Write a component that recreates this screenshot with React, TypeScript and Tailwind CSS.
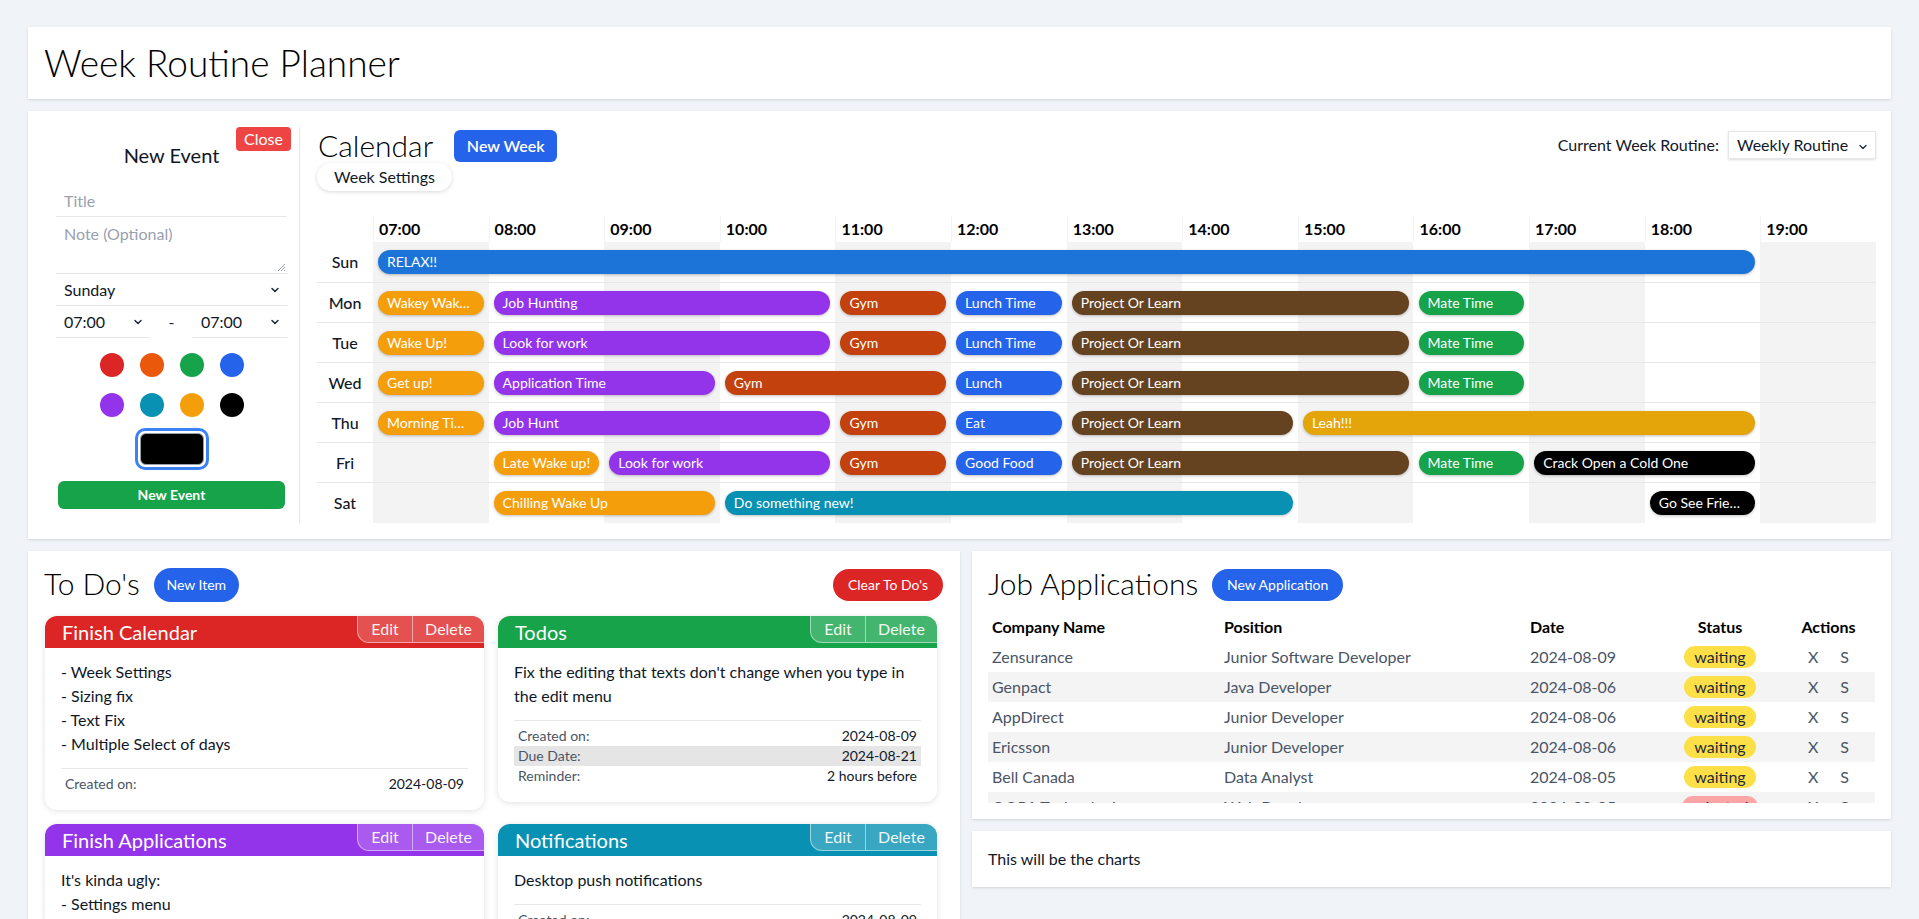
import { ChevronDown } from "lucide-react"

const hours = ["07:00", "08:00", "09:00", "10:00", "11:00", "12:00", "13:00", "14:00", "15:00", "16:00", "17:00", "18:00", "19:00"]

type CalEvent = { title: string; start: number; end: number; color: string }

const orange = "bg-[#f59e0b]"
const purple = "bg-[#9333ea]"
const gym = "bg-[#c2410c]"
const blue = "bg-[#2563eb]"
const brown = "bg-[#654321]"
const green = "bg-[#16a34a]"

const week: { day: string; events: CalEvent[] }[] = [
  { day: "Sun", events: [{ title: "RELAX!!", start: 7, end: 19, color: "bg-[#1c74d9]" }] },
  {
    day: "Mon",
    events: [
      { title: "Wakey Wakey Eggs and Bakey", start: 7, end: 8, color: orange },
      { title: "Job Hunting", start: 8, end: 11, color: purple },
      { title: "Gym", start: 11, end: 12, color: gym },
      { title: "Lunch Time", start: 12, end: 13, color: blue },
      { title: "Project Or Learn", start: 13, end: 16, color: brown },
      { title: "Mate Time", start: 16, end: 17, color: green },
    ],
  },
  {
    day: "Tue",
    events: [
      { title: "Wake Up!", start: 7, end: 8, color: orange },
      { title: "Look for work", start: 8, end: 11, color: purple },
      { title: "Gym", start: 11, end: 12, color: gym },
      { title: "Lunch Time", start: 12, end: 13, color: blue },
      { title: "Project Or Learn", start: 13, end: 16, color: brown },
      { title: "Mate Time", start: 16, end: 17, color: green },
    ],
  },
  {
    day: "Wed",
    events: [
      { title: "Get up!", start: 7, end: 8, color: orange },
      { title: "Application Time", start: 8, end: 10, color: purple },
      { title: "Gym", start: 10, end: 12, color: gym },
      { title: "Lunch", start: 12, end: 13, color: blue },
      { title: "Project Or Learn", start: 13, end: 16, color: brown },
      { title: "Mate Time", start: 16, end: 17, color: green },
    ],
  },
  {
    day: "Thu",
    events: [
      { title: "Morning Time Routine", start: 7, end: 8, color: orange },
      { title: "Job Hunt", start: 8, end: 11, color: purple },
      { title: "Gym", start: 11, end: 12, color: gym },
      { title: "Eat", start: 12, end: 13, color: blue },
      { title: "Project Or Learn", start: 13, end: 15, color: brown },
      { title: "Leah!!!", start: 15, end: 19, color: "bg-[#e4a50a]" },
    ],
  },
  {
    day: "Fri",
    events: [
      { title: "Late Wake up!", start: 8, end: 9, color: orange },
      { title: "Look for work", start: 9, end: 11, color: purple },
      { title: "Gym", start: 11, end: 12, color: gym },
      { title: "Good Food", start: 12, end: 13, color: blue },
      { title: "Project Or Learn", start: 13, end: 16, color: brown },
      { title: "Mate Time", start: 16, end: 17, color: green },
      { title: "Crack Open a Cold One", start: 17, end: 19, color: "bg-black" },
    ],
  },
  {
    day: "Sat",
    events: [
      { title: "Chilling Wake Up", start: 8, end: 10, color: orange },
      { title: "Do something new!", start: 10, end: 15, color: "bg-[#0891b2]" },
      { title: "Go See Friends", start: 18, end: 19, color: "bg-black" },
    ],
  },
]

const swatches = ["bg-[#dc2626]", "bg-[#ea580c]", "bg-[#16a34a]", "bg-[#2563eb]", "bg-[#9333ea]", "bg-[#0891b2]", "bg-[#f59e0b]", "bg-black"]

type Todo = { title: string; color: string; body: string; info: [string, string][] }

const todos: Todo[] = [
  {
    title: "Finish Calendar",
    color: "bg-[#dc2626]",
    body: "- Week Settings\n- Sizing fix\n- Text Fix\n- Multiple Select of days",
    info: [["Created on:", "2024-08-09"]],
  },
  {
    title: "Todos",
    color: "bg-[#16a34a]",
    body: "Fix the editing that texts don't change when you type in the edit menu",
    info: [
      ["Created on:", "2024-08-09"],
      ["Due Date:", "2024-08-21"],
      ["Reminder:", "2 hours before"],
    ],
  },
  {
    title: "Finish Applications",
    color: "bg-[#9333ea]",
    body: "It's kinda ugly:\n- Settings menu\n- Colors\n- Layout",
    info: [["Created on:", "2024-08-09"]],
  },
  {
    title: "Notifications",
    color: "bg-[#0891b2]",
    body: "Desktop push notifications",
    info: [["Created on:", "2024-08-09"]],
  },
]

const applications = [
  { company: "Zensurance", position: "Junior Software Developer", date: "2024-08-09", status: "waiting" },
  { company: "Genpact", position: "Java Developer", date: "2024-08-06", status: "waiting" },
  { company: "AppDirect", position: "Junior Developer", date: "2024-08-06", status: "waiting" },
  { company: "Ericsson", position: "Junior Developer", date: "2024-08-06", status: "waiting" },
  { company: "Bell Canada", position: "Data Analyst", date: "2024-08-05", status: "waiting" },
  { company: "OOPA Technologies", position: "Web Developer", date: "2024-08-05", status: "rejected" },
  { company: "Shopify", position: "Junior Developer", date: "2024-08-04", status: "waiting" },
]

function UnderlineSelect({ value, className }: { value: string; className?: string }) {
  return (
    <div className={`relative border-b border-gray-200 ${className ?? ""}`}>
      <div className="h-[31px] px-2 text-base leading-[31px] text-gray-900">{value}</div>
      <ChevronDown className="absolute right-[6px] top-[10px] h-3 w-3 text-gray-800" strokeWidth={3} />
    </div>
  )
}

function NewEventForm() {
  return (
    <div className="relative w-[272px] shrink-0 border-r border-gray-200">
      <button type="button" className="absolute right-2 top-0 h-6 rounded-sm bg-[#ef4444] px-2 text-base leading-6 text-white">
        Close
      </button>
      <div className="ml-7 mr-3 flex flex-col">
        <h2 className="pt-[14px] text-center text-xl leading-7 text-gray-900">New Event</h2>
        <div className="mt-[16px] h-8 border-b border-gray-200 px-2 text-base leading-8 text-gray-400">Title</div>
        <div className="relative h-[57px] border-b border-gray-200 px-2 pt-[5px] text-base leading-6 text-gray-400">
          Note (Optional)
          <svg className="absolute bottom-[2px] right-[2px] h-2 w-2" viewBox="0 0 8 8">
            <path d="M8 1L1 8M8 4L4 8M8 7L7 8" stroke="#9ca3af" strokeWidth="1" />
          </svg>
        </div>
        <UnderlineSelect value="Sunday" />
        <div className="flex items-center justify-between">
          <UnderlineSelect value="07:00" className="w-[94px]" />
          <span className="text-base text-gray-800">-</span>
          <UnderlineSelect value="07:00" className="w-[94px]" />
        </div>
        <div className="mx-auto mt-[15px] grid grid-cols-4 gap-4">
          {swatches.map((c) => (
            <span key={c} className={`h-6 w-6 rounded-full ${c}`} />
          ))}
        </div>
        <div className="mx-auto mt-[11px] h-[42px] w-[74px] rounded-[10px] border-[3px] border-[#3b82f6] p-[2px]">
          <div className="h-full w-full rounded-md border border-gray-400 bg-black" />
        </div>
        <button type="button" className="mx-[2px] mt-[11px] h-7 rounded-md bg-[#16a34a] text-sm font-bold text-white">
          New Event
        </button>
      </div>
    </div>
  )
}

function Calendar() {
  return (
    <div className="flex min-w-0 flex-1 flex-col pl-[17px] pr-[15px]">
      <div className="flex items-start justify-between">
        <div>
          <div className="flex items-center gap-[21px]">
            <h2 className="pl-px text-3xl font-light leading-9 text-black">Calendar</h2>
            <button type="button" className="mt-[2px] h-8 w-[103px] rounded-md bg-[#2563eb] text-base font-semibold text-white">
              New Week
            </button>
          </div>
          <button type="button" className="h-7 w-[135px] rounded-full bg-white text-base text-gray-900 shadow-[0_1px_4px_rgba(0,0,0,0.15)]">
            Week Settings
          </button>
        </div>
        <div className="mt-1 flex items-center gap-[9px]">
          <span className="text-base text-gray-900">Current Week Routine:</span>
          <div className="relative h-7 w-[148px] border border-gray-200 bg-white shadow-sm">
            <span className="pl-2 text-base leading-[26px] text-gray-900">Weekly Routine</span>
            <ChevronDown className="absolute right-[6px] top-[9px] h-3 w-3 text-gray-800" strokeWidth={2.5} />
          </div>
        </div>
      </div>

      <div className="mt-[25px] flex flex-col">
        <div className="flex h-[26px]">
          <div className="w-14 shrink-0" />
          <div className="flex flex-1">
            {hours.map((h) => (
              <div key={h} className="flex-1 border-l border-gray-100 pl-[5px] text-base font-bold leading-[26px] text-black">
                {h}
              </div>
            ))}
          </div>
        </div>
        {week.map((row, i) => (
          <div key={row.day} className={`flex ${i === 0 ? "h-[41px]" : "h-10"} ${i < week.length - 1 ? "border-b border-gray-200" : ""}`}>
            <div className="flex w-14 shrink-0 items-center justify-center text-base font-medium text-gray-900">{row.day}</div>
            <div className="relative flex flex-1">
              {hours.map((h, j) => (
                <div key={h} className={`flex-1 ${j % 2 === 0 ? "bg-[#f3f3f3]" : "bg-white"}`} />
              ))}
              {row.events.map((ev) => (
                <div
                  key={ev.title + ev.start}
                  className={`absolute top-1/2 h-6 -translate-y-1/2 truncate rounded-full pl-[9px] pr-2 text-sm leading-6 text-white shadow-[0_1px_3px_rgba(0,0,0,0.25)] ${ev.color}`}
                  style={{
                    left: `calc(${((ev.start - 7) / 13) * 100}% + 5px)`,
                    width: `calc(${((ev.end - ev.start) / 13) * 100}% - 10px)`,
                  }}
                >
                  {ev.title}
                </div>
              ))}
            </div>
          </div>
        ))}
      </div>
    </div>
  )
}

function TodoCard({ todo }: { todo: Todo }) {
  return (
    <div className="overflow-hidden rounded-xl bg-white shadow-[0_1px_6px_rgba(0,0,0,0.12)]">
      <div className={`relative h-8 ${todo.color}`}>
        <span className="pl-[17px] text-xl leading-8 text-white">{todo.title}</span>
        <div className="absolute right-0 top-0 flex h-[27px] overflow-hidden rounded-bl-xl rounded-tr-xl border-b border-l border-white/50 bg-white/20 text-base leading-[26px] text-white/95">
          <span className="w-[54px] text-center">Edit</span>
          <span className="w-[72px] border-l border-white/50 text-center">Delete</span>
        </div>
      </div>
      <div className="px-4 pb-4 pt-3">
        <p className="whitespace-pre-line text-base leading-6 text-gray-900">{todo.body}</p>
        <div className="mt-3 border-t border-gray-200 pt-[5px]">
          {todo.info.map(([label, value], i) => (
            <div key={label} className={`flex h-5 items-center justify-between px-1 text-sm ${i % 2 === 1 ? "bg-[#e5e5e5]" : ""}`}>
              <span className="text-gray-600">{label}</span>
              <span className="text-gray-900">{value}</span>
            </div>
          ))}
        </div>
      </div>
    </div>
  )
}

function TodoSection() {
  return (
    <div className="w-[932px] shrink-0 self-start bg-white p-4 shadow-sm">
      <div className="flex h-9 items-center justify-between">
        <div className="flex items-center gap-[14px]">
          <h2 className="pb-1 text-3xl font-light text-black">To Do's</h2>
          <button type="button" className="h-[34px] w-[85px] rounded-full bg-[#2563eb] text-sm text-white">
            New Item
          </button>
        </div>
        <button type="button" className="mr-[1px] h-8 w-[110px] rounded-full bg-[#dc2626] text-sm text-white">
          Clear To Do's
        </button>
      </div>
      <div className="ml-px mt-[13px] grid w-[892px] grid-cols-2 items-start gap-[14px]">
        {todos.map((t) => (
          <TodoCard key={t.title} todo={t} />
        ))}
      </div>
    </div>
  )
}

function JobApplications() {
  return (
    <div className="bg-white p-4 shadow-sm">
      <div className="flex h-9 items-center gap-[14px]">
        <h2 className="pb-1 text-3xl font-light text-black">Job Applications</h2>
        <button type="button" className="h-8 w-[131px] rounded-full bg-[#2563eb] text-sm text-white">
          New Application
        </button>
      </div>
      <div className="mt-[8px] h-[192px] overflow-hidden">
        <table className="w-full table-fixed border-collapse text-left">
          <thead>
            <tr className="h-[31px] text-base font-bold text-black">
              <th className="w-[236px] pl-1">Company Name</th>
              <th className="w-[306px]">Position</th>
              <th className="w-[136px]">Date</th>
              <th className="w-[108px] text-center">Status</th>
              <th className="pl-2 text-center">Actions</th>
            </tr>
          </thead>
          <tbody>
            {applications.map((a, i) => (
              <tr key={a.company} className={`h-[30px] text-base text-gray-600 ${i % 2 === 1 ? "bg-[#f4f4f4]" : ""}`}>
                <td className="pl-1">{a.company}</td>
                <td>{a.position}</td>
                <td>{a.date}</td>
                <td className="text-center">
                  <span
                    className={`inline-block h-[22px] rounded-full px-[10px] leading-[22px] text-gray-800 ${
                      a.status === "waiting" ? "bg-[#fde047]" : "bg-[#fca5a5]"
                    }`}
                  >
                    {a.status}
                  </span>
                </td>
                <td className="pl-2">
                  <div className="flex justify-center gap-[22px]">
                    <span>X</span>
                    <span>S</span>
                  </div>
                </td>
              </tr>
            ))}
          </tbody>
        </table>
      </div>
    </div>
  )
}

export default function App() {
  return (
    <div className="min-h-screen bg-[#f0f3f8] px-7 pb-6 pt-[27px] font-['Lato',sans-serif]">
      <header className="flex h-[72px] items-center bg-white px-4 shadow-sm">
        <h1 className="text-[37px] font-light text-black">Week Routine Planner</h1>
      </header>

      <section className="mt-3 flex bg-white py-4 shadow-sm">
        <NewEventForm />
        <Calendar />
      </section>

      <div className="mt-3 flex gap-3">
        <TodoSection />
        <div className="flex min-w-0 flex-1 flex-col gap-3 self-start">
          <JobApplications />
          <div className="bg-white p-4 text-base leading-6 text-gray-900 shadow-sm">This will be the charts</div>
        </div>
      </div>
    </div>
  )
}
